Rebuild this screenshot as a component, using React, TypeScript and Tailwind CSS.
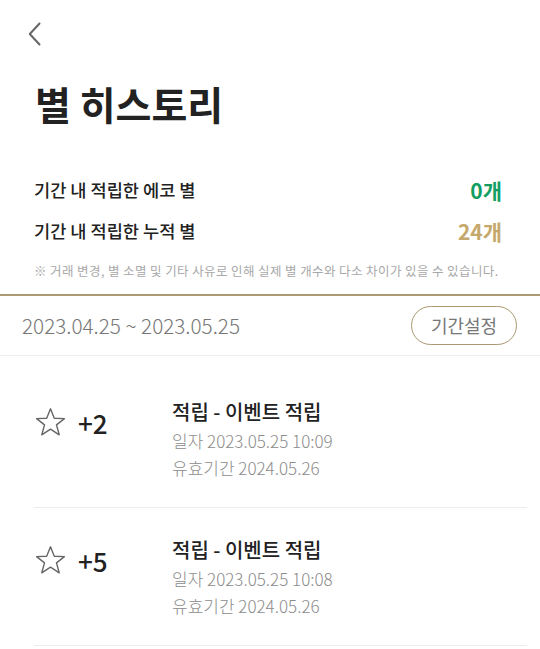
import React from "react";

const Star = () => (
  <svg width="31" height="30" viewBox="0 0 31 30" fill="none">
    <path
      d="M15.5 1.8 L19.3 11.2 L29.4 11.6 L21.5 17.9 L24.2 27.8 L15.5 22.2 L6.8 27.8 L9.5 17.9 L1.6 11.6 L11.7 11.2 Z"
      stroke="#666"
      strokeWidth="1.4"
      strokeLinejoin="round"
    />
  </svg>
);

const items = [
  { amt: "+2", date: "2023.05.25 10:09", exp: "2024.05.26" },
  { amt: "+5", date: "2023.05.25 10:08", exp: "2024.05.26" },
];

export default function App() {
  return (
    <div className="w-[540px] h-[649px] bg-white overflow-hidden text-[#222] font-['Noto_Sans_CJK_KR','Noto_Sans',sans-serif]">
      <div className="h-[68px] pl-[28px] flex items-center">
        <svg width="13" height="24" viewBox="0 0 13 24" fill="none">
          <path d="M11.5 1.5 L1.8 12 L11.5 22.5" stroke="#666" strokeWidth="2" strokeLinecap="round" strokeLinejoin="round" />
        </svg>
      </div>
      <h1 className="mt-[13px] pl-[35px] text-[39px] leading-[44px] font-bold">별 히스토리</h1>
      <div className="mt-[45px] pl-[34px] pr-[38px]">
        <div className="h-[41px] flex items-center justify-between">
          <span className="text-[17.6px] font-medium">기간 내 적립한 에코 별</span>
          <span className="text-[21px] font-bold text-[#129e62]">0개</span>
        </div>
        <div className="h-[41px] flex items-center justify-between">
          <span className="text-[17.6px] font-medium">기간 내 적립한 누적 별</span>
          <span className="text-[21px] font-bold text-[#c4a86c]">24개</span>
        </div>
        <p className="mt-[10px] text-[12.5px] leading-[18px] tracking-[0.4px] text-[#a8a8a8] whitespace-nowrap">
          ※ 거래 변경, 별 소멸 및 기타 사유로 인해 실제 별 개수와 다소 차이가 있을 수 있습니다.
        </p>
      </div>
      <div className="mt-[14px] h-[2px] bg-[#ab9a72]" />
      <div className="h-[60px] pl-[22px] pr-[23px] flex items-center justify-between border-b border-[#ececec]">
        <span className="text-[20.7px] font-light text-[#777]">2023.04.25 ~ 2023.05.25</span>
        <button className="w-[106px] h-[39px] rounded-full border-[1.5px] border-[#ab9a72] text-[18px] text-[#777] flex items-center justify-center">
          기간설정
        </button>
      </div>
      <div className="pt-[14px] pl-[34px] pr-[13px]">
        {items.map((it, i) => (
          <div key={i} className="pt-[26px] pb-[26px] border-b border-[#ececec] flex">
            <div className="w-[138px] h-[52px] flex items-center">
              <div className="ml-[1px]">
                <Star />
              </div>
              <span className="ml-[12px] text-[26px] font-medium">{it.amt}</span>
            </div>
            <div className="flex flex-col">
              <span className="text-[20px] leading-[31px] font-medium">적립 - 이벤트 적립</span>
              <span className="text-[17px] leading-[27px] font-light text-[#8c8c8c]">일자 {it.date}</span>
              <span className="text-[17px] leading-[27px] font-light text-[#8c8c8c]">유효기간 {it.exp}</span>
            </div>
          </div>
        ))}
      </div>
    </div>
  );
}
